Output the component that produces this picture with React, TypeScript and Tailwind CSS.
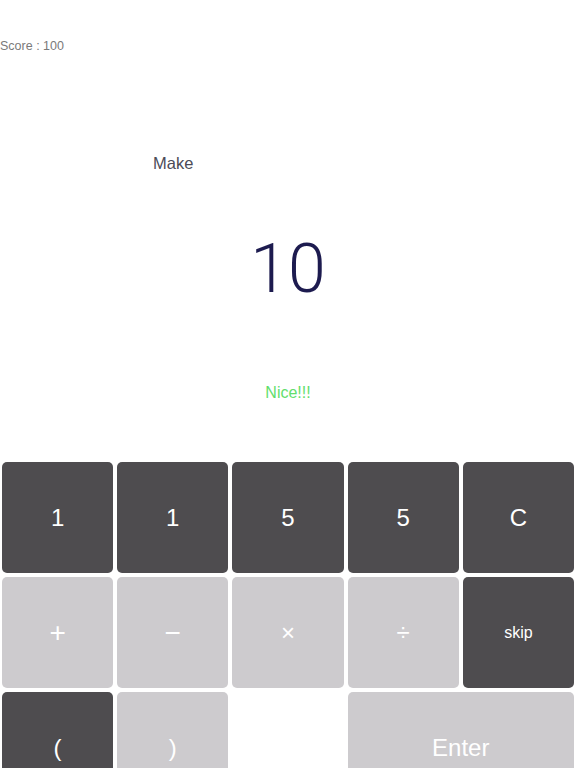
const keyBase = "flex items-center justify-center rounded-[5px] h-[111px] text-white"
const dark = "bg-[#4e4c4f]"
const light = "bg-[#cdcbce]"

type Key = { label: string; tone: "dark" | "light" | "none"; span?: number; size?: string }

const keys: Key[] = [
  { label: "1", tone: "dark" },
  { label: "1", tone: "dark" },
  { label: "5", tone: "dark" },
  { label: "5", tone: "dark" },
  { label: "C", tone: "dark" },
  { label: "+", tone: "light", size: "text-[28px] font-light" },
  { label: "−", tone: "light", size: "text-[28px] font-light" },
  { label: "×", tone: "light", size: "text-[24px] font-light" },
  { label: "÷", tone: "light", size: "text-[24px] font-light" },
  { label: "skip", tone: "dark", size: "text-[16px]" },
  { label: "(", tone: "dark" },
  { label: ")", tone: "light" },
  { label: "", tone: "none" },
  { label: "Enter", tone: "light", span: 2, size: "text-[24px] text-[#f4f4f4]" },
]

export default function App() {
  return (
    <div className="w-[576px] h-[768px] overflow-hidden bg-white font-['Liberation_Sans',Arial,sans-serif]">
      <div className="pt-[38px] text-[12.5px] leading-[16px] text-[#7a7a7a]">Score : 100</div>
      <div className="mt-[99px] pl-[153px] text-[16.5px] leading-[20px] text-[#4b4b57]">Make</div>
      <div className="mt-[62px] text-center text-[68px] leading-[68px] font-light text-[#1d1b4f] font-['Roboto',sans-serif]">
        10
      </div>
      <div className="mt-[80px] text-center text-[16px] leading-[20px] text-[#62de6c]">Nice!!!</div>
      <div className="mt-[59px] grid grid-cols-5 gap-1 px-[2px]">
        {keys.map((k, i) => (
          <button
            key={i}
            className={`${keyBase} ${k.tone === "dark" ? dark : k.tone === "light" ? light : "bg-white"} ${
              k.span === 2 ? "col-span-2" : ""
            } ${k.size ?? "text-[24px]"}`}
          >
            {k.label}
          </button>
        ))}
      </div>
    </div>
  )
}
